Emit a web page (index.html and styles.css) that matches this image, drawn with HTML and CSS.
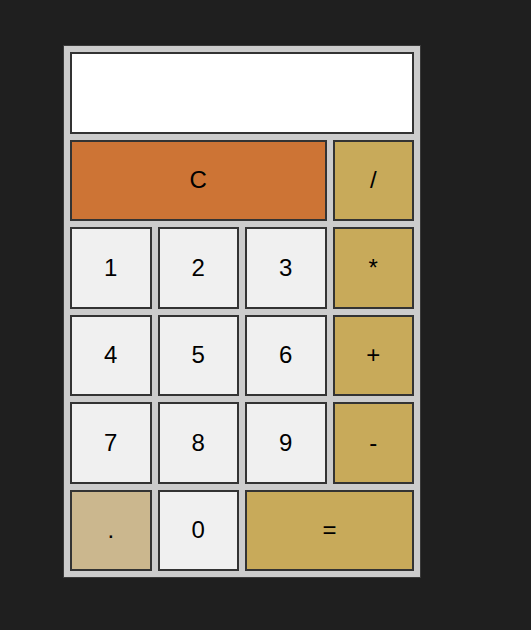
FILE: index.html
```html
<!DOCTYPE html>
<html>
<head>
<meta charset="utf-8">
<link rel="stylesheet" href="styles.css">
</head>
<body>
<div class="calc">
  <div class="display"></div>
  <button class="btn clear span3">C</button>
  <button class="btn op">/</button>
  <button class="btn num">1</button>
  <button class="btn num">2</button>
  <button class="btn num">3</button>
  <button class="btn op">*</button>
  <button class="btn num">4</button>
  <button class="btn num">5</button>
  <button class="btn num">6</button>
  <button class="btn op">+</button>
  <button class="btn num">7</button>
  <button class="btn num">8</button>
  <button class="btn num">9</button>
  <button class="btn op">-</button>
  <button class="btn dot">.</button>
  <button class="btn num">0</button>
  <button class="btn op span2">=</button>
</div>
</body>
</html>
```
FILE: styles.css
```css
html, body {
  margin: 0;
  background: #1f1f1f;
}
body {
  padding: 45px 0 0 63px;
  height: 630px;
  box-sizing: border-box;
}
.calc {
  display: grid;
  grid-template-columns: repeat(4, 81.5px);
  grid-auto-rows: 81.5px;
  gap: 6px;
  padding: 6px;
  width: max-content;
  background: #cccccc;
  border: 1px solid #3a3a3a;
}
.display {
  grid-column: 1 / 5;
  background: #ffffff;
  border: 2px solid #333333;
  box-sizing: border-box;
}
.btn {
  box-sizing: border-box;
  border: 2px solid #333333;
  margin: 0;
  padding: 0;
  font-family: "Liberation Sans", Arial, sans-serif;
  font-size: 24px;
  color: #000;
}
.num { background: #f0f0f0; }
.op { background: #c8aa5a; }
.clear { background: #cd7435; }
.dot { background: #cbb78e; }
.span3 { grid-column: span 3; }
.span2 { grid-column: span 2; }
```
